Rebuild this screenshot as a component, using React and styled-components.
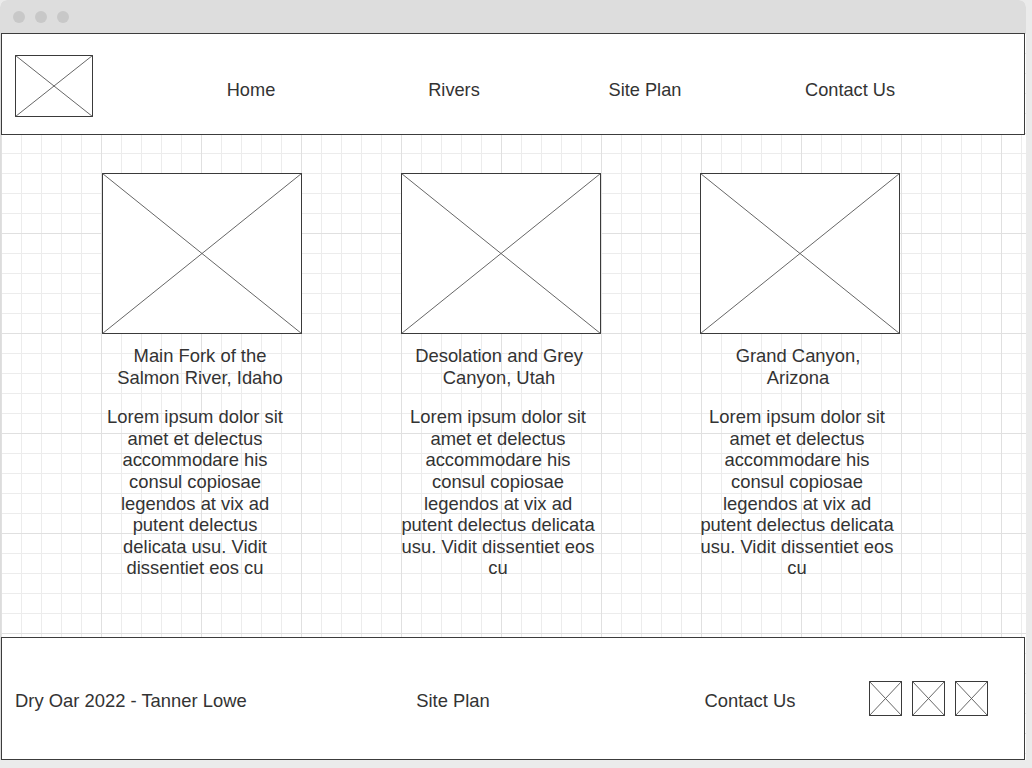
import React from "react";
import styled, { createGlobalStyle } from "styled-components";

const GlobalStyle = createGlobalStyle`
  html, body {
    margin: 0;
    background: #ebebeb;
  }
  body {
    font-family: "Liberation Sans", Arial, sans-serif;
    color: #333333;
  }
`;

const Placeholder = ({ w, h }) => (
  <Frame width={w} height={h} viewBox={`0 0 ${w} ${h}`}>
    <rect x="0.5" y="0.5" width={w - 1} height={h - 1} fill="#ffffff" stroke="#3a3a3a" />
    <line x1="0.5" y1="0.5" x2={w - 0.5} y2={h - 0.5} stroke="#555555" strokeWidth="0.9" />
    <line x1={w - 0.5} y1="0.5" x2="0.5" y2={h - 0.5} stroke="#555555" strokeWidth="0.9" />
  </Frame>
);

const cards = [
  {
    title: "Main Fork of the Salmon River, Idaho",
    textWidth: 186,
    inset: 0,
  },
  {
    title: "Desolation and Grey Canyon, Utah",
    textWidth: 198,
    inset: -2,
  },
  {
    title: "Grand Canyon, Arizona",
    textWidth: 198,
    inset: -2,
  },
];

const lorem =
  "Lorem ipsum dolor sit amet et delectus accommodare his consul copiosae legendos at vix ad putent delectus delicata usu. Vidit dissentiet eos cu";

const App = () => {
  return (
    <>
      <GlobalStyle />
      <Window>
        <TitleBar>
          <Dot />
          <Dot />
          <Dot />
        </TitleBar>
        <Canvas>
          <Header>
            <Logo>
              <Placeholder w={78} h={62} />
            </Logo>
            <Nav>
              <NavItem w={200}>Home</NavItem>
              <NavItem w={206}>Rivers</NavItem>
              <NavItem w={176}>Site Plan</NavItem>
              <NavItem w={234}>Contact Us</NavItem>
            </Nav>
          </Header>
          <Main>
            {cards.map((c) => (
              <Card key={c.title}>
                <Placeholder w={200} h={161} />
                <CardTitle>{c.title}</CardTitle>
                <CardText w={c.textWidth} inset={c.inset}>
                  {lorem}
                </CardText>
              </Card>
            ))}
          </Main>
          <Footer>
            <Copy>Dry Oar 2022 - Tanner Lowe</Copy>
            <FooterLink w={200}>Site Plan</FooterLink>
            <FooterLink w={194} gap={100}>
              Contact Us
            </FooterLink>
            <Socials>
              <Placeholder w={33} h={35} />
              <Placeholder w={33} h={35} />
              <Placeholder w={33} h={35} />
            </Socials>
          </Footer>
        </Canvas>
      </Window>
    </>
  );
};

export default App;

const Frame = styled.svg`
  display: block;
  flex: none;
`;

const Window = styled.div`
  width: 1026px;
  border-radius: 7px 7px 0 0;
  overflow: hidden;
  background: #ffffff;
`;

const TitleBar = styled.div`
  height: 33px;
  background: #dddddd;
  display: flex;
  align-items: center;
  gap: 10px;
  padding-left: 13px;
  box-sizing: border-box;
`;

const Dot = styled.span`
  width: 12px;
  height: 12px;
  border-radius: 50%;
  background: #c8c8c8;
`;

const Canvas = styled.div`
  height: 727px;
  display: flex;
  flex-direction: column;
  border-left: 1px solid #dcdcdc;
  background-color: #ffffff;
  background-image: linear-gradient(to right, #e0e0e0 1px, transparent 1px),
    linear-gradient(to bottom, #e0e0e0 1px, transparent 1px),
    linear-gradient(to right, #ececec 1px, transparent 1px),
    linear-gradient(to bottom, #ececec 1px, transparent 1px);
  background-size: 100px 100px, 100px 100px, 20px 20px, 20px 20px;
`;

const Header = styled.header`
  width: 1024px;
  height: 102px;
  flex: none;
  box-sizing: border-box;
  border: 1px solid #3c3c3c;
  background: #ffffff;
  display: flex;
  align-items: flex-start;
  padding-left: 13px;
`;

const Logo = styled.div`
  margin-top: 21px;
`;

const Nav = styled.nav`
  display: flex;
  margin-left: 58px;
  margin-top: 46px;
`;

const NavItem = styled.a`
  width: ${(p) => p.w}px;
  text-align: center;
  font-size: 18.2px;
  line-height: 21px;
  color: #333333;
  cursor: pointer;
`;

const Main = styled.main`
  flex: 1;
  display: flex;
  align-items: flex-start;
  gap: 99px;
  padding: 38px 0 0 101px;
`;

const Card = styled.article`
  width: 200px;
  display: flex;
  flex-direction: column;
  align-items: center;
`;

const CardTitle = styled.h3`
  margin: 11px 4px 0 0;
  width: 180px;
  font-size: 18.4px;
  font-weight: normal;
  line-height: 21.6px;
  text-align: center;
`;

const CardText = styled.p`
  margin: 18px 0 0 ${(p) => p.inset}px;
  align-self: flex-start;
  width: ${(p) => p.w}px;
  font-size: 18.4px;
  line-height: 21.6px;
  text-align: center;
`;

const Footer = styled.footer`
  width: 1024px;
  height: 123px;
  flex: none;
  box-sizing: border-box;
  border: 1px solid #3c3c3c;
  background: #ffffff;
  display: flex;
  align-items: center;
  padding: 4px 0 0 13px;
  font-size: 18.4px;
  line-height: 21.6px;
`;

const Copy = styled.span`
  width: 338px;
  flex: none;
`;

const FooterLink = styled.a`
  width: ${(p) => p.w}px;
  margin-left: ${(p) => p.gap || 0}px;
  text-align: center;
  flex: none;
  cursor: pointer;
`;

const Socials = styled.div`
  display: flex;
  gap: 10px;
  margin: -4px 0 0 22px;
`;
